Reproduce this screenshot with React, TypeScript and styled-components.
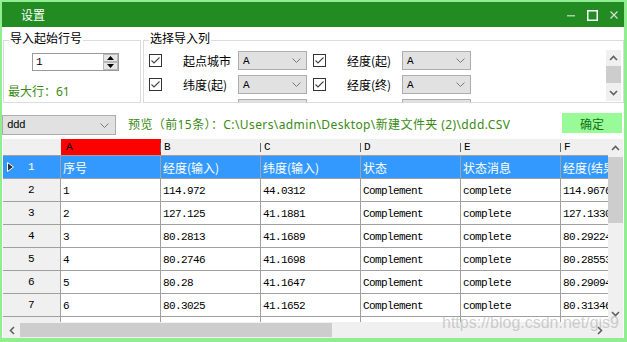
import styled, { createGlobalStyle } from 'styled-components';

const GRID_LINE = '#a0a0a0';
const SELECT_BLUE = '#3399ff';
const NOTE_GREEN = '#3a8a12';

const columns = ['A', 'B', 'C', 'D', 'E', 'F'];

const rows: string[][] = [
  ['序号', '经度(输入)', '纬度(输入)', '状态', '状态消息', '经度(结果)'],
  ['1', '114.972', '44.0312', 'Complement', 'complete', '114.967612'],
  ['2', '127.125', '41.1881', 'Complement', 'complete', '127.133021'],
  ['3', '80.2813', '41.1689', 'Complement', 'complete', '80.292241'],
  ['4', '80.2746', '41.1698', 'Complement', 'complete', '80.285532'],
  ['5', '80.28', '41.1647', 'Complement', 'complete', '80.290941'],
  ['6', '80.3025', '41.1652', 'Complement', 'complete', '80.313462'],
  ['', '', '', '', '', ''],
];

// the third row only peeks in under the group's bottom edge
const pickRows: [string, string][] = [
  ['起点城市', '经度(起)'],
  ['纬度(起)', '经度(终)'],
  ['', ''],
];

type Dir = 'up' | 'down' | 'left' | 'right';

function Arrow({ dir, color = '#606060' }: { dir: Dir; color?: string }) {
  const horizontal = dir === 'left' || dir === 'right';
  const w = horizontal ? 6 : 9;
  const h = horizontal ? 9 : 6;
  const points = {
    up: '1,5 4.5,1.5 8,5',
    down: '1,1 4.5,4.5 8,1',
    left: '5,1 1.5,4.5 5,8',
    right: '1,1 4.5,4.5 1,8',
  }[dir];
  return (
    <svg width={w} height={h} viewBox={`0 0 ${w} ${h}`}>
      <polyline points={points} fill='none' stroke={color} strokeWidth='1.6' />
    </svg>
  );
}

function CheckIcon() {
  return (
    <svg width='13' height='13' viewBox='0 0 13 13'>
      <rect x='0.5' y='0.5' width='12' height='12' fill='#fff' stroke='#333' />
      <polyline points='2.5,6.5 5,9 10.5,3.5' fill='none' stroke='#444' strokeWidth='1.1' />
    </svg>
  );
}

function DropChevron() {
  return (
    <svg width='9' height='5' viewBox='0 0 9 5'>
      <polyline points='0.5,0.5 4.5,4.5 8.5,0.5' fill='none' stroke='#7a7a7a' strokeWidth='1' />
    </svg>
  );
}

export default function App() {
  return (
    <>
      <GlobalStyle />
      <Window>
        <TitleBar>
          <TitleText>设置</TitleText>
          <WindowButtons>
            <WinButton>
              <svg width='9' height='3' viewBox='0 0 9 3'>
                <rect x='0' y='1' width='8' height='1.5' fill='#a8cfa8' />
              </svg>
            </WinButton>
            <WinButton>
              <svg width='11' height='11' viewBox='0 0 11 11'>
                <rect x='0.75' y='0.75' width='9.5' height='9.5' fill='none' stroke='#fff' strokeWidth='1.5' />
              </svg>
            </WinButton>
            <WinButton>
              <svg width='8' height='8' viewBox='0 0 8 8'>
                <path d='M0.5 0.5 L7.5 7.5 M7.5 0.5 L0.5 7.5' stroke='#dcdcdc' strokeWidth='1.2' />
              </svg>
            </WinButton>
          </WindowButtons>
        </TitleBar>

        <TopSection>
          <StartGroup>
            <GroupTitle>导入起始行号</GroupTitle>
            <StartBody>
              <UpDown>
                <UpDownValue>1</UpDownValue>
                <SpinStack>
                  <SpinButton>
                    <svg width='7' height='4' viewBox='0 0 7 4'>
                      <polygon points='0,4 3.5,0 7,4' fill='#000' />
                    </svg>
                  </SpinButton>
                  <SpinButton>
                    <svg width='7' height='4' viewBox='0 0 7 4'>
                      <polygon points='0,0 3.5,4 7,0' fill='#000' />
                    </svg>
                  </SpinButton>
                </SpinStack>
              </UpDown>
              <MaxRow>最大行：61</MaxRow>
            </StartBody>
          </StartGroup>

          <ColumnGroup>
            <GroupTitle>选择导入列</GroupTitle>
            <ColumnBody>
              <PickList>
                {pickRows.map((pair, i) => (
                  <PickRow key={i}>
                    {pair.map((label, j) => (
                      <PickItem key={j}>
                        <CheckIcon />
                        <PickLabel>{label}</PickLabel>
                        <SmallCombo>
                          <ComboText>{label ? 'A' : ''}</ComboText>
                          <DropChevron />
                        </SmallCombo>
                      </PickItem>
                    ))}
                  </PickRow>
                ))}
              </PickList>
              <VScroll>
                <ScrollButton $size={16}>
                  <Arrow dir='up' />
                </ScrollButton>
                <VTrack>
                  <Thumb style={{ height: 17 }} />
                </VTrack>
                <ScrollButton $size={17}>
                  <Arrow dir='down' />
                </ScrollButton>
              </VScroll>
            </ColumnBody>
          </ColumnGroup>
        </TopSection>

        <ControlRow>
          <FileCombo>
            <ComboText>ddd</ComboText>
            <DropChevron />
          </FileCombo>
          <PreviewText>
            预览（前15条）：{'C:\\Users\\admin\\Desktop\\新建文件夹 (2)\\ddd.CSV'}
          </PreviewText>
          <OkButton>确定</OkButton>
        </ControlRow>

        <GridFrame>
          <DataArea>
            <Table>
              <CornerCell />
              {columns.map((c) => (
                <HeaderCell key={c} $active={c === 'A'}>
                  {c}
                </HeaderCell>
              ))}
              {rows.map((row, r) => {
                const selected = r === 0;
                return [
                  <RowHead key={`h${r}`} $selected={selected}>
                    {selected && (
                      <RowMarker>
                        <svg width='7' height='10' viewBox='0 0 7 10'>
                          <polygon points='0.5,0.5 6.5,5 0.5,9.5' fill='#333' stroke='#fff' strokeWidth='1' />
                        </svg>
                      </RowMarker>
                    )}
                    {r + 1}
                  </RowHead>,
                  ...row.map((v, c) => (
                    <Cell key={`${r}-${c}`} $selected={selected}>
                      {v}
                    </Cell>
                  )),
                ];
              })}
            </Table>
          </DataArea>
          <VScroll>
            <ScrollButton $size={17}>
              <Arrow dir='up' />
            </ScrollButton>
            <VTrack>
              <Thumb style={{ height: 66, marginTop: 1 }} />
            </VTrack>
            <ScrollButton $size={17}>
              <Arrow dir='down' />
            </ScrollButton>
          </VScroll>
          <HScroll>
            <HButton>
              <Arrow dir='left' />
            </HButton>
            <HTrack>
              <Thumb style={{ width: 312 }} />
            </HTrack>
            <HButton>
              <Arrow dir='right' />
            </HButton>
          </HScroll>
          <ScrollCorner />
        </GridFrame>

        <Watermark>https://blog.csdn.net/gis9</Watermark>
      </Window>
    </>
  );
}

const GlobalStyle = createGlobalStyle`
  html, body {
    margin: 0;
    padding: 0;
    background: #fff;
  }
  body {
    font-family: "Noto Sans", "Noto Sans CJK SC", sans-serif;
  }
  * {
    box-sizing: border-box;
  }
`;

const Window = styled.div`
  position: relative;
  width: 627px;
  height: 342px;
  display: flex;
  flex-direction: column;
  overflow: hidden;
  background: #fff;
  border-style: solid;
  border-color: #90ee90;
  border-width: 2px 3px 4px 2px;
`;

const TitleBar = styled.div`
  height: 25px;
  flex: none;
  display: flex;
  align-items: center;
  padding-left: 19px;
  background: #228b22;
`;

const TitleText = styled.span`
  font-family: "Noto Sans CJK SC", sans-serif;
  font-size: 12px;
  line-height: 14px;
  color: #fff;
  margin-top: 1px;
`;

const WindowButtons = styled.div`
  margin-left: auto;
  display: flex;
  height: 100%;
`;

const WinButton = styled.div`
  width: 21px;
  display: flex;
  align-items: center;
  justify-content: center;
  padding-top: 1px;
`;

const TopSection = styled.div`
  height: 76px;
  flex: none;
  display: flex;
  gap: 2px;
  padding: 3px 0 0 1px;
`;

const GroupBox = styled.fieldset`
  margin: 0;
  padding: 0;
  min-width: 0;
  height: 73px;
  border: 1px solid #dcdcdc;
`;

const StartGroup = styled(GroupBox)`
  width: 138px;
  flex: none;
`;

const ColumnGroup = styled(GroupBox)`
  flex: 1;
`;

const GroupTitle = styled.legend`
  margin-left: 5px;
  padding: 0 1px 5px;
  font-family: "Noto Sans CJK SC", sans-serif;
  font-size: 12px;
  line-height: 15px;
  color: #000;
`;

const StartBody = styled.div`
  display: flex;
  flex-direction: column;
  padding: 3px 0 0 4px;
`;

const UpDown = styled.div`
  width: 87px;
  height: 18px;
  margin-left: 24px;
  display: flex;
  border: 1px solid #9a9a9a;
  background: #fff;
`;

const UpDownValue = styled.span`
  flex: 1;
  padding-left: 3px;
  font-family: "Liberation Mono", monospace;
  font-size: 11px;
  line-height: 16px;
`;

const SpinStack = styled.div`
  width: 15px;
  display: flex;
  flex-direction: column;
`;

const SpinButton = styled.div`
  flex: 1;
  display: flex;
  align-items: center;
  justify-content: center;
  background: #e6e6e6;
  border: 1px solid #b8b8b8;
`;

const MaxRow = styled.div`
  margin-top: 14px;
  font-size: 12px;
  line-height: 14px;
  color: ${NOTE_GREEN};
`;

const ColumnBody = styled.div`
  height: 52px;
  display: flex;
  overflow: hidden;
`;

const PickList = styled.div`
  flex: 1;
  display: flex;
  flex-direction: column;
  gap: 5px;
  padding: 1px 0 0 5px;
`;

const PickRow = styled.div`
  display: flex;
  gap: 6px;
  flex: none;
`;

const PickItem = styled.div`
  display: flex;
  align-items: center;
  height: 19px;
`;

const PickLabel = styled.span`
  width: 55px;
  margin-left: 21px;
  font-family: "Noto Sans CJK SC", sans-serif;
  font-size: 12px;
  line-height: 14px;
  color: #000;
  white-space: nowrap;
`;

const ComboBase = styled.div`
  display: flex;
  align-items: center;
  background: #e1e1e1;
  border: 1px solid #adadad;
`;

const SmallCombo = styled(ComboBase)`
  width: 69px;
  height: 19px;
  padding: 0 5px 0 4px;
  justify-content: space-between;
`;

const ComboText = styled.span`
  font-family: "Liberation Mono", monospace;
  font-size: 11px;
  line-height: 14px;
  letter-spacing: -0.6px;
  color: #000;
`;

const VScroll = styled.div`
  width: 15px;
  flex: none;
  display: flex;
  flex-direction: column;
  background: #f0f0f0;

  ${ColumnBody} & {
    margin: 0 2px 1px 0;
  }
`;

const ScrollButton = styled.div<{ $size: number }>`
  height: ${(p) => p.$size}px;
  flex: none;
  display: flex;
  align-items: center;
  justify-content: center;
`;

const VTrack = styled.div`
  flex: 1;
  display: flex;
  flex-direction: column;
`;

const Thumb = styled.div`
  background: #cdcdcd;
  flex: none;
`;

const ControlRow = styled.div`
  height: 36px;
  flex: none;
  display: flex;
  align-items: flex-start;
  padding-top: 10px;
`;

const FileCombo = styled(ComboBase)`
  width: 114px;
  height: 20px;
  margin-top: 2px;
  padding: 0 6px 0 4px;
  justify-content: space-between;
`;

const PreviewText = styled.span`
  margin: 2px 0 0 12px;
  font-size: 12px;
  line-height: 20px;
  letter-spacing: 0.4px;
  color: ${NOTE_GREEN};
  white-space: nowrap;
`;

const OkButton = styled.div`
  margin: 0 2px 0 auto;
  width: 60px;
  height: 20px;
  display: flex;
  align-items: center;
  justify-content: center;
  background: #98fb98;
  font-family: "Noto Sans CJK SC", sans-serif;
  font-size: 12px;
  color: #157015;
`;

const GridFrame = styled.div`
  height: 199px;
  flex: none;
  margin: 0 1px;
  display: grid;
  grid-template-columns: 1fr 15px;
  grid-template-rows: 183px 16px;
`;

const DataArea = styled.div`
  overflow: hidden;
  background: #fff;
`;

const Table = styled.div`
  display: grid;
  grid-template-columns: 58px repeat(6, 100px);
  grid-auto-rows: 23px;
  grid-template-rows: 17px;
  width: max-content;
`;

const CornerCell = styled.div`
  background: #f0f0f0;
  border-bottom: 1px solid ${GRID_LINE};
`;

const HeaderCell = styled.div<{ $active?: boolean }>`
  display: flex;
  align-items: center;
  padding-left: ${(p) => (p.$active ? 5 : 3)}px;
  border-bottom: 1px solid ${GRID_LINE};
  background:
    linear-gradient(#6a6a6a, #6a6a6a) right 0 top 4px / 1px 9px no-repeat,
    ${(p) => (p.$active ? '#ff0000' : '#f0f0f0')};
  font-family: "Liberation Mono", monospace;
  font-size: 11px;
  line-height: 12px;
  color: #000;
`;

const RowHead = styled.div<{ $selected?: boolean }>`
  position: relative;
  display: flex;
  align-items: center;
  justify-content: center;
  padding-right: 1px;
  background: ${(p) => (p.$selected ? SELECT_BLUE : '#f0f0f0')};
  color: ${(p) => (p.$selected ? '#fff' : '#000')};
  border-right: 1px solid ${GRID_LINE};
  border-bottom: 1px solid ${GRID_LINE};
  font-family: "Liberation Mono", monospace;
  font-size: 11px;
  letter-spacing: -0.6px;
`;

const RowMarker = styled.span`
  position: absolute;
  left: 4px;
  top: 6px;
  display: flex;
`;

const Cell = styled.div<{ $selected?: boolean }>`
  display: flex;
  align-items: center;
  padding: 1px 0 0 2px;
  overflow: hidden;
  white-space: nowrap;
  background: ${(p) => (p.$selected ? SELECT_BLUE : '#fff')};
  color: ${(p) => (p.$selected ? '#fff' : '#000')};
  border-right: 1px solid ${GRID_LINE};
  border-bottom: 1px solid ${GRID_LINE};
  font-family: ${(p) =>
    p.$selected ? '"Noto Sans CJK SC", sans-serif' : '"Liberation Mono", monospace'};
  font-size: ${(p) => (p.$selected ? 12 : 11)}px;
  letter-spacing: ${(p) => (p.$selected ? 0 : -0.6)}px;
`;

const HScroll = styled.div`
  display: flex;
  background: #f0f0f0;
`;

const HButton = styled.div`
  width: 17px;
  flex: none;
  display: flex;
  align-items: center;
  justify-content: center;
`;

const HTrack = styled.div`
  flex: 1;
  display: flex;
  padding: 1px 0;
`;

const ScrollCorner = styled.div`
  background: #f0f0f0;
`;

const Watermark = styled.div`
  position: absolute;
  right: 5px;
  bottom: 6px;
  font-family: "Liberation Sans", sans-serif;
  font-size: 16px;
  line-height: 18px;
  color: rgba(175, 175, 175, 0.6);
  pointer-events: none;
`;
